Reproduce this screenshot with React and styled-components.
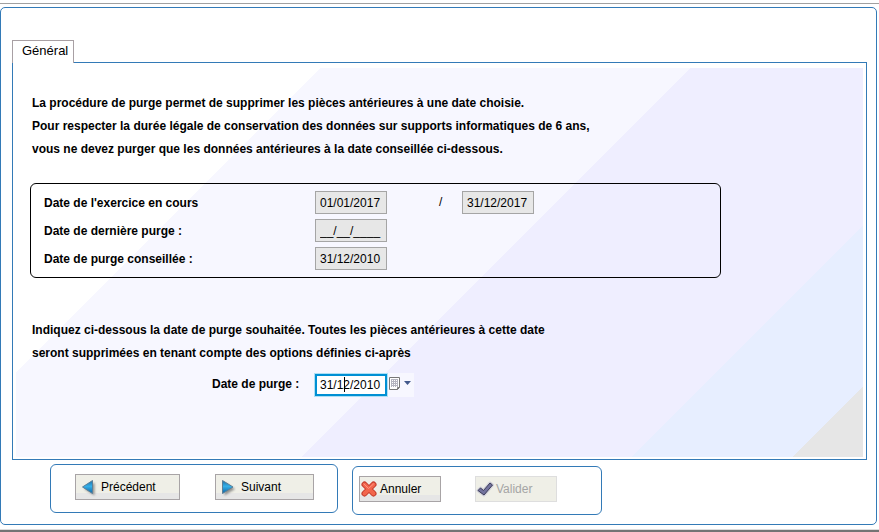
import React, { useState } from "react";
import styled, { createGlobalStyle, css } from "styled-components";

const BLUE = "#337ab7";

const GlobalStyle = createGlobalStyle`
  *, *::before, *::after { box-sizing: border-box; }
  body {
    margin: 0;
    background: #fff;
    color: #000;
    font: 12px/23px "Liberation Sans", Arial, sans-serif;
  }
`;

const Window = styled.div`
  display: flex;
  flex-direction: column;
  padding-top: 3px;
`;

const TopRule = styled.div`
  height: 1px;
  margin-bottom: 3px;
  background: #a0a0a0;
`;

const BottomRule = styled.div`
  height: 3px;
  margin-top: 4px;
  border-top: 1px solid #dcdcdc;
  background: #747474;
`;

const Frame = styled.main`
  margin-right: 2px;
  padding: 32px 9px 9px 11px;
  border: 1px solid ${BLUE};
  border-radius: 5px;
`;

const Tabs = styled.div`
  display: flex;
`;

const Tab = styled.button`
  position: relative;
  z-index: 1;
  min-width: 62px;
  height: 23px;
  margin-bottom: -1px;
  padding: 0 3px 2px 9px;
  border: 1px solid #a8a0a4;
  border-bottom: 0;
  background: #fff;
  color: #000;
  font: 13px/18px "Liberation Sans", Arial, sans-serif;
  text-align: left;
`;

const Panel = styled.section`
  padding: 5px 3px 2px;
  border: 1px solid ${BLUE};
`;

const Canvas = styled.form`
  padding: 24px 14px 60px;
  background: linear-gradient(
    135deg,
    #fff 215px,
    #f7f7ff 215px 477px,
    #efeeff 477px 710px,
    #e7eeff 710px 824px,
    #e6e6e6 824px
  );
`;

const Note = styled.p`
  margin: 0 2px;
  font-weight: bold;
`;

const DateGroup = styled.div`
  display: grid;
  gap: 5px;
  max-width: 691px;
  margin: 22px 0 41px;
  padding: 6px 13px 8px;
  border: 1px solid #000;
  border-radius: 6px;
`;

const DateRow = styled.div`
  display: grid;
  grid-template-columns: 271px 72px 75px 72px;
  align-items: center;
  height: 23px;
`;

const Label = styled.label`
  font-weight: bold;
`;

const RowLabel = styled(Label)`
  padding-top: 2px;
`;

const Slash = styled.span`
  padding-left: 52px;
`;

const dateText = css`
  margin: 0;
  color: #000;
  font: 12px/16px "Liberation Sans", Arial, sans-serif;
`;

const ReadOnlyDate = styled.input`
  ${dateText}
  width: 72px;
  height: 23px;
  padding: 0 4px;
  border: 1px solid #a5a5a5;
  background: #e7e7e7;
`;

const PurgeRow = styled.div`
  display: flex;
  align-items: flex-start;
  margin-top: 8px;
  padding-left: 182px;
`;

const PurgeLabel = styled(Label)`
  width: 102px;
`;

const PurgeField = styled.span`
  position: relative;
  display: flex;
`;

const PurgeInput = styled.input`
  ${dateText}
  width: 74px;
  height: 24px;
  padding: 0 3px;
  border: 3px solid #0090d4;
  background: #fff;
  outline: 1px solid #aee0f4;
  outline-offset: -1px;
  caret-color: transparent;
`;

const Caret = styled.span`
  position: absolute;
  top: 4px;
  left: 30px;
  width: 1px;
  height: 15px;
  background: #000;
`;

const PickerButton = styled.button`
  display: flex;
  width: 26px;
  height: 24px;
  padding: 4px 1px;
  border: 0;
  background: #f7f7ff;
`;

const Footer = styled.footer`
  display: flex;
  align-items: flex-start;
  gap: 14px;
  margin: 4px 0 0 38px;
`;

const ActionBox = styled.div`
  display: flex;
  align-items: flex-start;
  width: ${(p) => p.$width};
  gap: ${(p) => p.$gap};
  margin-top: ${(p) => p.$top};
  padding: 9px 0 0 ${(p) => p.$pad};
  min-height: 49px;
  border: 1px solid ${BLUE};
  border-radius: 6px;
`;

const ActionButton = styled.button`
  display: flex;
  flex: none;
  align-items: center;
  gap: 3px;
  width: ${(p) => p.$width};
  height: 26px;
  padding: 0 0 0 ${(p) => (p.$compact ? "1px" : "6px")};
  border: 1px solid #a8a4a6;
  background: linear-gradient(#efefe7 18px, #e6e6e6 18px);
  color: #000;
  font: 12px/16px "Liberation Sans", Arial, sans-serif;

  &:disabled {
    border-color: #dedede;
    background: #efefe7;
    color: #a5a5a5;
  }
`;

const Glyph = styled.svg`
  flex: none;
  overflow: visible;
`;

function ArrowIcon({ back }) {
  const id = back ? "arrow-back" : "arrow-next";
  const shape = back ? "M0.5 8 10.5 1.5V14.5Z" : "M0.5 1.5 11 8 0.5 14.5Z";
  return (
    <Glyph width="16" height="16" viewBox="0 0 16 16" aria-hidden="true">
      <defs>
        <linearGradient id={id} x1="0" y1="0" x2="0" y2="1">
          <stop offset="0" stopColor="#1c6fa8" />
          <stop offset="0.45" stopColor="#35b0e8" />
          <stop offset="1" stopColor="#0b63a5" />
        </linearGradient>
        <filter id={`${id}-soft`} x="-50%" y="-50%" width="200%" height="200%">
          <feGaussianBlur stdDeviation="1" />
        </filter>
      </defs>
      <path d={shape} transform="translate(2 2)" fill="#555" opacity="0.6" filter={`url(#${id}-soft)`} />
      <path d={shape} fill={`url(#${id})`} stroke="#5a7f98" strokeWidth="1" strokeLinejoin="round" />
    </Glyph>
  );
}

function CrossIcon() {
  return (
    <Glyph width="16" height="16" viewBox="0 0 16 16" aria-hidden="true" fill="none" strokeLinecap="round">
      <path d="M3.5 3.5 12.5 12.5M12.5 3.5 3.5 12.5" stroke="#c23b2b" strokeWidth="6" />
      <path d="M3.5 3.5 12.5 12.5M12.5 3.5 3.5 12.5" stroke="#f2664d" strokeWidth="4" />
      <path d="M3 3 7.5 7.5 12.5 3" stroke="#ff9580" />
    </Glyph>
  );
}

function CheckIcon() {
  const shape = "M1 9.5 3.5 7 6.5 9.5 13 2 15.5 4 7 14Z";
  return (
    <Glyph width="16" height="16" viewBox="0 0 16 16" aria-hidden="true" strokeLinejoin="round">
      <path d={shape} fill="#d0d0da" stroke="#d0d0da" strokeWidth="3" />
      <path d={shape} fill="#73739e" stroke="#3c3c58" />
    </Glyph>
  );
}

function CalendarIcon() {
  return (
    <Glyph width="24" height="14" viewBox="0 0 24 14" aria-hidden="true">
      <path d="M0.5 0.5H10.5V10.5L8.5 12.5H0.5Z" fill="#fff" stroke="#777" />
      <path d="M10.5 10.5H8.5V12.5" fill="none" stroke="#777" />
      <path d="M2.5 2V10M4.5 2V10M6.5 2V10M8.5 2V10M2 2.5H9M2 4.5H9M2 6.5H9M2 8.5H9" stroke="#b4b4c0" />
      <path d="M15 4H22L18.5 8Z" fill="#42598c" />
    </Glyph>
  );
}

export default function App() {
  const [purgeDate, setPurgeDate] = useState("31/12/2010");
  return (
    <>
      <GlobalStyle />
      <Window>
        <TopRule />
        <Frame>
          <Tabs role="tablist">
            <Tab type="button" role="tab" aria-selected="true">
              Général
            </Tab>
          </Tabs>
          <Panel>
            <Canvas onSubmit={(e) => e.preventDefault()}>
              <Note>La procédure de purge permet de supprimer les pièces antérieures à une date choisie.</Note>
              <Note>Pour respecter la durée légale de conservation des données sur supports informatiques de 6 ans,</Note>
              <Note>vous ne devez purger que les données antérieures à la date conseillée ci-dessous.</Note>
              <DateGroup>
                <DateRow>
                  <RowLabel htmlFor="start">Date de l'exercice en cours</RowLabel>
                  <ReadOnlyDate id="start" readOnly value="01/01/2017" />
                  <Slash>/</Slash>
                  <ReadOnlyDate aria-label="Fin de l'exercice" readOnly value="31/12/2017" />
                </DateRow>
                <DateRow>
                  <RowLabel htmlFor="last">Date de dernière purge :</RowLabel>
                  <ReadOnlyDate id="last" readOnly value="__/__/____" />
                </DateRow>
                <DateRow>
                  <RowLabel htmlFor="advised">Date de purge conseillée :</RowLabel>
                  <ReadOnlyDate id="advised" readOnly value="31/12/2010" />
                </DateRow>
              </DateGroup>
              <Note>Indiquez ci-dessous la date de purge souhaitée. Toutes les pièces antérieures à cette date</Note>
              <Note>seront supprimées en tenant compte des options définies ci-après</Note>
              <PurgeRow>
                <PurgeLabel htmlFor="purge">Date de purge :</PurgeLabel>
                <PurgeField>
                  <PurgeInput id="purge" value={purgeDate} onChange={(e) => setPurgeDate(e.target.value)} />
                  <Caret />
                </PurgeField>
                <PickerButton type="button" aria-label="Choisir une date">
                  <CalendarIcon />
                </PickerButton>
              </PurgeRow>
            </Canvas>
          </Panel>
          <Footer>
            <ActionBox $width="288px" $gap="35px" $pad="24px">
              <ActionButton type="button" $width="105px">
                <ArrowIcon back />
                Précédent
              </ActionButton>
              <ActionButton type="button" $width="99px">
                <ArrowIcon />
                Suivant
              </ActionButton>
            </ActionBox>
            <ActionBox $width="250px" $gap="34px" $pad="6px" $top="2px">
              <ActionButton type="button" $width="82px" $compact>
                <CrossIcon />
                Annuler
              </ActionButton>
              <ActionButton type="button" $width="82px" $compact disabled>
                <CheckIcon />
                Valider
              </ActionButton>
            </ActionBox>
          </Footer>
        </Frame>
        <BottomRule />
      </Window>
    </>
  );
}
